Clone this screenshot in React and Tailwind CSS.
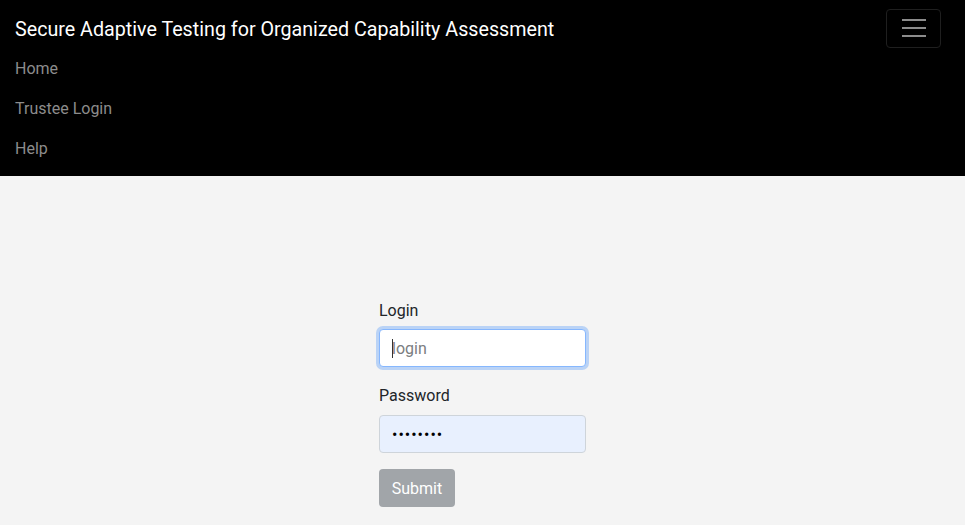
import React, { useState } from "react";

const font = { fontFamily: 'Roboto, "Noto Sans", Arial, sans-serif' };

export default function App() {
  const [login, setLogin] = useState("");
  const [password, setPassword] = useState("password");

  return (
    <div className="min-h-screen bg-[#f4f4f4]" style={font}>
      {/* Navbar */}
      <nav className="bg-black py-2 pl-[15px] pr-[24px]">
        <div className="flex items-center justify-between h-[40px]">
          <a href="#" className="text-white text-[19.7px] leading-[30px] pt-[4px]">
            Secure Adaptive Testing for Organized Capability Assessment
          </a>
          <button className="w-[55px] h-[39px] border border-[#1f1f1f] rounded-[4px] flex flex-col items-center justify-center gap-[6px]">
            <span className="block w-[24px] h-[2px] bg-[#8c8c8c]" />
            <span className="block w-[24px] h-[2px] bg-[#8c8c8c]" />
            <span className="block w-[24px] h-[2px] bg-[#8c8c8c]" />
          </button>
        </div>
        <ul className="flex flex-col">
          {["Home", "Trustee Login", "Help"].map((item) => (
            <li key={item}>
              <a href="#" className="block pt-[9px] pb-[7px] text-[16px] leading-6 text-[#8c8c8c]">
                {item}
              </a>
            </li>
          ))}
        </ul>
      </nav>

      {/* Formulario */}
      <div className="pt-[121px] pb-4">
        <form className="w-[207px] mx-auto" onSubmit={(e) => e.preventDefault()}>
          <div className="mb-4">
            <label className="block pt-[2px] mb-[6px] text-[16px] leading-6 text-[#212529]">Login</label>
            <div className="relative">
              <input
                type="text"
                value={login}
                onChange={(e) => setLogin(e.target.value)}
                placeholder="login"
                className="w-full h-[38px] px-3 bg-white border border-[#86b7fe] rounded-[4px] text-[16px] text-[#212529] placeholder:text-[#7a7d80] outline-none shadow-[0_0_0_3px_rgba(13,110,253,0.25)]"
              />
              <span className="absolute left-[13px] top-[10px] w-px h-[19px] bg-[#333]" />
            </div>
          </div>
          <div className="mb-4">
            <label className="block pt-px mb-[7px] text-[16px] leading-6 text-[#212529]">Password</label>
            <input
              type="password"
              value={password}
              onChange={(e) => setPassword(e.target.value)}
              className="w-full h-[38px] px-3 bg-[#e8f0fe] border border-[#ced4da] rounded-[4px] text-[16px] tracking-[1px] text-black outline-none"
            />
          </div>
          <button
            type="submit"
            disabled
            className="h-[38px] w-[76px] pt-[2px] rounded-[4px] bg-[#a1a5a9] text-white text-[16px]"
          >
            Submit
          </button>
        </form>
      </div>
    </div>
  );
}
